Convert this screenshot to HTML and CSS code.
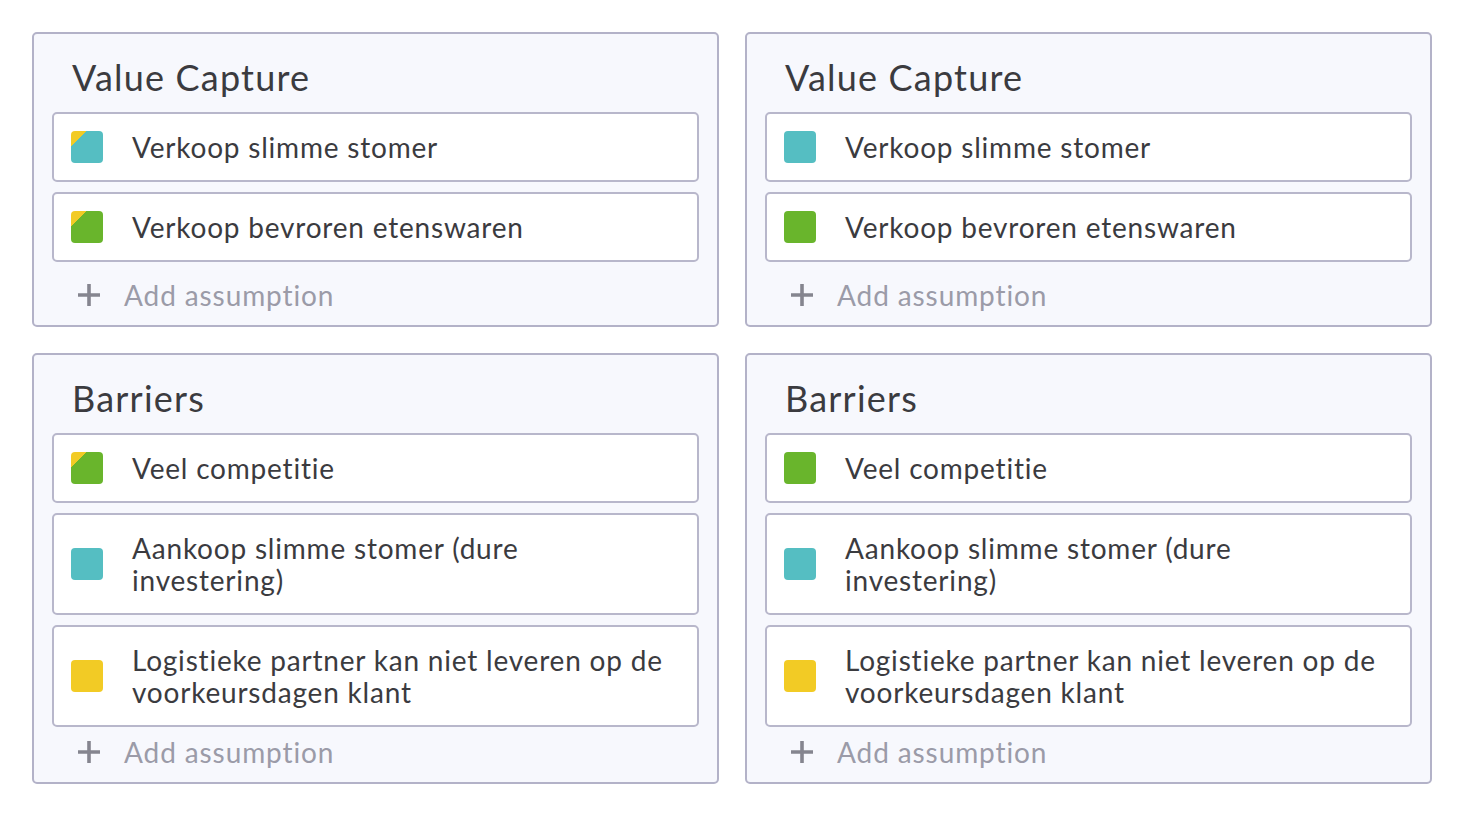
FILE: index.html
```html
<!DOCTYPE html>
<html>
<head>
<meta charset="utf-8">
<link rel="stylesheet" href="styles.css">
</head>
<body>
<div class="grid">
  <section class="card">
    <h2 class="title">Value Capture</h2>
    <div class="list">
      <div class="item"><span class="sq sq--teal-split"></span><span class="txt">Verkoop slimme stomer</span></div>
      <div class="item"><span class="sq sq--green-split"></span><span class="txt">Verkoop bevroren etenswaren</span></div>
    </div>
    <div class="add add--loose"><svg class="plus" viewBox="0 0 24 24"><path d="M12 1v22M1 12h22"/></svg><span>Add assumption</span></div>
  </section>
  <section class="card">
    <h2 class="title">Value Capture</h2>
    <div class="list">
      <div class="item"><span class="sq sq--teal"></span><span class="txt">Verkoop slimme stomer</span></div>
      <div class="item"><span class="sq sq--green"></span><span class="txt">Verkoop bevroren etenswaren</span></div>
    </div>
    <div class="add add--loose"><svg class="plus" viewBox="0 0 24 24"><path d="M12 1v22M1 12h22"/></svg><span>Add assumption</span></div>
  </section>
  <section class="card">
    <h2 class="title">Barriers</h2>
    <div class="list">
      <div class="item"><span class="sq sq--green-split"></span><span class="txt">Veel competitie</span></div>
      <div class="item"><span class="sq sq--teal"></span><span class="txt">Aankoop slimme stomer (dure<br>investering)</span></div>
      <div class="item"><span class="sq sq--yellow"></span><span class="txt">Logistieke partner kan niet leveren op de voorkeursdagen klant</span></div>
    </div>
    <div class="add"><svg class="plus" viewBox="0 0 24 24"><path d="M12 1v22M1 12h22"/></svg><span>Add assumption</span></div>
  </section>
  <section class="card">
    <h2 class="title">Barriers</h2>
    <div class="list">
      <div class="item"><span class="sq sq--green"></span><span class="txt">Veel competitie</span></div>
      <div class="item"><span class="sq sq--teal"></span><span class="txt">Aankoop slimme stomer (dure<br>investering)</span></div>
      <div class="item"><span class="sq sq--yellow"></span><span class="txt">Logistieke partner kan niet leveren op de voorkeursdagen klant</span></div>
    </div>
    <div class="add"><svg class="plus" viewBox="0 0 24 24"><path d="M12 1v22M1 12h22"/></svg><span>Add assumption</span></div>
  </section>
</div>
</body>
</html>
```

FILE: styles.css
```css
html, body {
  margin: 0;
  padding: 0;
  background: #ffffff;
}
body {
  font-family: "Lato", "Open Sans", sans-serif;
  color: #3b3b3f;
}
.grid {
  display: grid;
  grid-template-columns: 1fr 1fr;
  align-items: start;
  column-gap: 26px;
  row-gap: 26px;
  padding: 32px 32px;
}
.card {
  background: #f7f8fd;
  border: 2px solid #b3b2c8;
  border-radius: 5px;
  padding: 20px 18px 10px 18px;
}
.title {
  margin: 0 0 12px 20px;
  font-size: 36px;
  line-height: 46px;
  font-weight: 400;
  letter-spacing: 1.2px;
  color: #3b3b3f;
}
.list {
  display: flex;
  flex-direction: column;
  gap: 10px;
}
.item {
  display: flex;
  align-items: center;
  gap: 29px;
  background: #ffffff;
  border: 2px solid #b8b7cb;
  border-radius: 5px;
  padding: 17px 17px;
}
.sq {
  flex: 0 0 32px;
  width: 32px;
  height: 32px;
  border-radius: 4px;
}
.sq--teal { background: #55bec2; }
.sq--green { background: #69b52c; }
.sq--yellow { background: #f2cb25; }
.sq--teal-split { background: linear-gradient(135deg, #f2cb25 25%, #55bec2 25%); }
.sq--green-split { background: linear-gradient(135deg, #f2cb25 25%, #69b52c 25%); }
.txt {
  font-size: 28px;
  line-height: 32px;
  letter-spacing: 0.8px;
  color: #3b3b3f;
}
.add {
  display: flex;
  align-items: center;
  gap: 23px;
  height: 40px;
  margin-top: 5px;
  padding-left: 25px;
  font-size: 28px;
  letter-spacing: 0.9px;
  color: #9b9ba8;
}
.add--loose {
  margin-top: 13px;
}
.plus {
  width: 24px;
  height: 24px;
  flex: 0 0 24px;
}
.plus path {
  stroke: #85858f;
  stroke-width: 3.6;
  fill: none;
}
```
